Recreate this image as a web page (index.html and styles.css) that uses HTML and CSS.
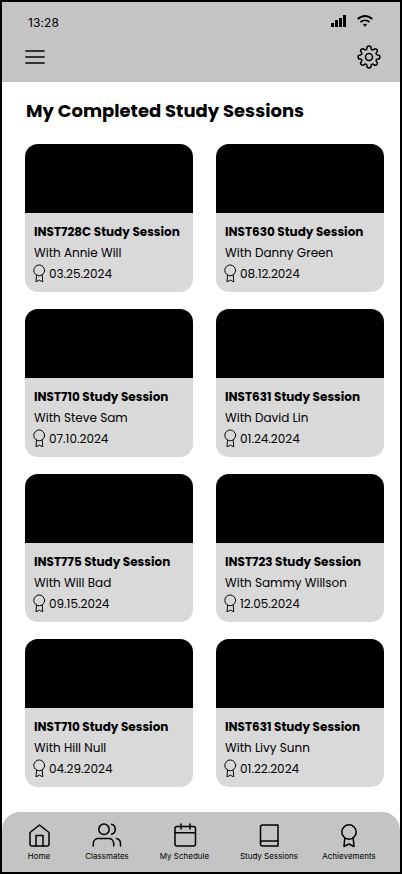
FILE: index.html
```html
<!DOCTYPE html>
<html lang="en">
<head>
<meta charset="utf-8">
<title>My Completed Study Sessions</title>
<link rel="stylesheet" href="styles.css">
</head>
<body>
<svg class="defs" width="0" height="0">
  <symbol id="award" viewBox="0 0 24 24"><circle cx="12.300" cy="8.500" r="7.200"/><path d="M8.700 14.700 8 24l4.500-2.600L17 24l-.7-9.300"/></symbol>
</svg>
<div class="screen">
  <header class="top">
    <div class="status">
      <span class="time">13:28</span>
      <span class="signals">
        <svg width="15" height="12" viewBox="0 0 15 12"><path d="M0 8h3v4H0zM4 5h3v7H4zM8 3h3v9H8zM12 0h3v12h-3z"/></svg>
        <svg class="wifi" width="16" height="12" viewBox="0 0 16 12"><path d="M.7 4.200C4.800-.1 11.200-.1 15.300 4.200M3.500 7.200c2.600-2.500 6.400-2.500 9 0"/><path class="dot" d="M8 11.700 5.900 9.600C7 8.500 9 8.500 10.100 9.600z"/></svg>
      </span>
    </div>
    <div class="tools">
      <svg class="menu" width="20" height="14" viewBox="0 0 20 14"><path d="M1 1h18M1 7h18M1 13h18"/></svg>
      <svg class="line gear" width="24" height="24" viewBox="0 0 24 24"><circle cx="12" cy="12" r="3.500"/><path d="M9.900 3.200a2.100 2.100 0 0 1 4.200 0c.1 1.800 1.500 2.300 2.700 1.200a2.050 2.050 0 0 1 2.900 2.900c-1.200 1.200-.6 2.500 1.100 2.600a2.100 2.100 0 0 1 0 4.200c-1.700.1-2.300 1.400-1.100 2.600a2.050 2.050 0 0 1-2.900 2.900c-1.200-1.100-2.600-.6-2.700 1.200a2.100 2.100 0 0 1-4.200 0c-.1-1.800-1.500-2.300-2.700-1.200a2.050 2.050 0 0 1-2.900-2.900c1.200-1.200.6-2.500-1.100-2.600a2.100 2.100 0 0 1 0-4.200c1.700-.1 2.300-1.400 1.100-2.600a2.050 2.050 0 0 1 2.900-2.900c1.200 1.100 2.600.6 2.700-1.200z"/></svg>
    </div>
  </header>
  <main>
    <h1>My Completed Study Sessions</h1>
    <div class="cards">
      <article><div class="cover"></div><h2>INST728C Study Session</h2><p>With Annie Will</p><p class="date"><svg><use href="#award"/></svg>03.25.2024</p></article>
      <article><div class="cover"></div><h2>INST630 Study Session</h2><p>With Danny Green</p><p class="date"><svg><use href="#award"/></svg>08.12.2024</p></article>
      <article><div class="cover"></div><h2>INST710 Study Session</h2><p>With Steve Sam</p><p class="date"><svg><use href="#award"/></svg>07.10.2024</p></article>
      <article><div class="cover"></div><h2>INST631 Study Session</h2><p>With David Lin</p><p class="date"><svg><use href="#award"/></svg>01.24.2024</p></article>
      <article><div class="cover"></div><h2>INST775 Study Session</h2><p>With Will Bad</p><p class="date"><svg><use href="#award"/></svg>09.15.2024</p></article>
      <article><div class="cover"></div><h2>INST723 Study Session</h2><p>With Sammy Willson</p><p class="date"><svg><use href="#award"/></svg>12.05.2024</p></article>
      <article><div class="cover"></div><h2>INST710 Study Session</h2><p>With Hill Null</p><p class="date"><svg><use href="#award"/></svg>04.29.2024</p></article>
      <article><div class="cover"></div><h2>INST631 Study Session</h2><p>With Livy Sunn</p><p class="date"><svg><use href="#award"/></svg>01.22.2024</p></article>
    </div>
  </main>
  <nav>
    <a class="home"><svg class="line" viewBox="0 0 26 26"><path d="M4 10.500 13.500 3l9.500 7.500V22a2 2 0 0 1-2 2H6a2 2 0 0 1-2-2z"/><path d="M10 24V13.500h7V24"/></svg>Home</a>
    <a class="classmates"><svg class="line wide" viewBox="0 0 30 26"><circle cx="12" cy="7.300" r="5.200"/><path d="M1.300 24v-3a5 5 0 0 1 5-4.500h10.400a5 5 0 0 1 5 4.500v3M19.500 2.300a5.200 5.200 0 0 1 0 10M24.500 16.500a5 5 0 0 1 4 4.500v3"/></svg>Classmates</a>
    <a class="schedule"><svg class="line" viewBox="0 0 26 26"><rect x="3" y="4.500" width="20.500" height="19.500" rx="2"/><path d="M18 2v5M9 2v5M3 10.700h20.500"/></svg>My Schedule</a>
    <a class="study"><svg class="line" viewBox="0 0 26 26"><path d="M4.500 21a2 2 0 0 1 2-2H22"/><path d="M6.500 3H22v21H6.500a2 2 0 0 1-2-2V5a2 2 0 0 1 2-2z"/></svg>Study Sessions</a>
    <a class="achievements"><svg class="line" viewBox="0 0 26 26"><circle cx="13" cy="10" r="7.200"/><path d="m8.800 16-.8 8.500 5-2.500 5 2.500-.8-8.500"/></svg>Achievements</a>
  </nav>
</div>
</body>
</html>
```
FILE: styles.css
```css
* { box-sizing: border-box; }
body { margin: 0; background: #fff; font-family: Poppins, Inter, sans-serif; color: #000; }
.defs { display: block; }
.screen { width: 402px; height: 874px; border: 2px solid #000; display: flex; flex-direction: column; overflow: hidden; }
svg { fill: none; flex: none; display: block; }
.top { height: 80px; background: #c4c4c4; padding: 12px 19px 0 23px; }
.status { display: flex; justify-content: space-between; height: 18px; padding: 0 8px 0 3px; }
.time { font: 400 12px/18px Inter, sans-serif; letter-spacing: .1px; }
.signals { display: flex; gap: 11px; padding-top: 1px; }
.signals svg { fill: #000; }
.signals .wifi { fill: none; stroke: #000; stroke-width: 1.800; }
.signals .dot { fill: #000; stroke: none; }
.tools { display: flex; justify-content: space-between; align-items: center; height: 26px; margin-top: 12px; }
.menu { stroke: #333; stroke-width: 1.800; stroke-linecap: round; }
.line { stroke: #000; stroke-width: 1.500; stroke-linecap: round; stroke-linejoin: round; }
main { flex: 1; padding: 15px 14px 0 23px; }
h1 { font-size: 18px; line-height: 28px; height: 28px; margin: 0 0 19px 1px; font-weight: 700; white-space: nowrap; }
.cards { display: grid; grid-template-columns: 168px 168px; column-gap: 23px; row-gap: 17px; }
article { height: 148px; border-radius: 13px; background: #d9d9d9; overflow: hidden; }
.cover { height: 69px; background: #000; margin-bottom: 8px; }
h2, p { margin: 0 0 0 9px; font-size: 12px; line-height: 21px; height: 21px; white-space: nowrap; }
h2 { font-weight: 700; }
p { font-weight: 400; }
.date { display: flex; align-items: center; }
.date svg { width: 18px; height: 18px; margin: -2px 1px 0 -4px; overflow: visible; stroke: #000; stroke-width: 1.300; stroke-linecap: round; stroke-linejoin: round; }
nav { height: 60px; background: #c4c4c4; border-radius: 18px 18px 0 0; display: flex; padding: 10px 20px 0 26px; }
nav a { display: flex; flex-direction: column; align-items: center; font: 400 8px/9px Inter, sans-serif; white-space: nowrap; }
nav svg { width: 26px; height: 26px; margin-bottom: 4px; }
nav svg.wide { width: 30px; }
.home { width: 22px; margin-right: 35px; }
.classmates { width: 44px; margin-right: 31px; }
.schedule { width: 49px; margin-right: 31px; }
.study { width: 58px; margin-right: 24px; }
.achievements { width: 54px; }
```
